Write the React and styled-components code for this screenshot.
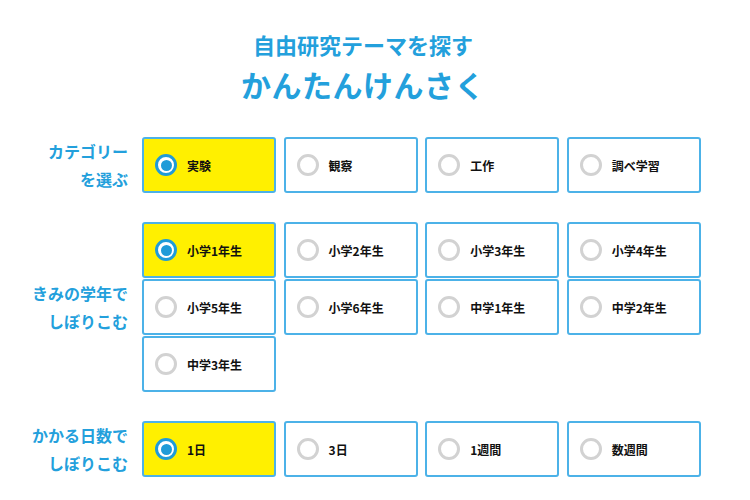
import React, { useState } from "react";
import styled, { createGlobalStyle } from "styled-components";

const GlobalStyle = createGlobalStyle`
  body {
    margin: 0;
    background: #fff;
    font-family: "Noto Sans CJK JP", "Noto Sans", sans-serif;
  }
`;

const BLUE = "#23a0dc";

const Page = styled.div`
  width: 750px;
  padding-top: 29px;
  padding-bottom: 20px;
`;

const Header = styled.header`
  display: flex;
  flex-direction: column;
  align-items: center;
  padding-right: 24px;
  color: ${BLUE};
  font-weight: 700;
`;

const SubTitle = styled.h2`
  margin: 0;
  font-size: 22px;
  line-height: 30px;
  font-weight: 700;
`;

const Title = styled.h1`
  margin: 5px 0 0;
  font-size: 30px;
  line-height: 40px;
  font-weight: 700;
  letter-spacing: 0.5px;
`;

const Form = styled.div`
  margin-top: 33px;
  display: flex;
  flex-direction: column;
  gap: 29px;
`;

const Section = styled.section`
  display: flex;
  align-items: center;
  gap: 14px;
`;

const Label = styled.div`
  width: 128px;
  text-align: right;
  color: ${BLUE};
  font-size: 16px;
  line-height: 28px;
  font-weight: 700;
`;

const Grid = styled.div`
  display: grid;
  grid-template-columns: repeat(4, 134px);
  column-gap: 7.6px;
  row-gap: 1px;
`;

const Card = styled.button`
  box-sizing: border-box;
  height: 56px;
  display: flex;
  align-items: center;
  gap: 10px;
  padding: 0 0 0 11px;
  border: 2px solid #4cb2e8;
  border-radius: 3px;
  background: ${(p) => (p.$active ? "#fff000" : "#fff")};
  cursor: pointer;
  font-family: inherit;
  font-size: 12px;
  font-weight: 700;
  color: #111;
  text-align: left;
`;

const Radio = styled.span`
  box-sizing: border-box;
  width: 22px;
  height: 22px;
  flex: none;
  border-radius: 50%;
  border: 3px solid ${(p) => (p.$active ? "#1f9bd8" : "#d2d2d2")};
  background: #fff;
  display: flex;
  align-items: center;
  justify-content: center;

  &::after {
    content: "";
    width: 11px;
    height: 11px;
    border-radius: 50%;
    background: ${(p) => (p.$active ? "#1f9bd8" : "transparent")};
  }
`;

const groups = [
  {
    key: "category",
    label: ["カテゴリー", "を選ぶ"],
    options: ["実験", "観察", "工作", "調べ学習"],
  },
  {
    key: "grade",
    label: ["きみの学年で", "しぼりこむ"],
    options: [
      "小学1年生",
      "小学2年生",
      "小学3年生",
      "小学4年生",
      "小学5年生",
      "小学6年生",
      "中学1年生",
      "中学2年生",
      "中学3年生",
    ],
  },
  {
    key: "days",
    label: ["かかる日数で", "しぼりこむ"],
    options: ["1日", "3日", "1週間", "数週間"],
  },
];

const OptionGroup = ({ group, value, onChange }) => (
  <Section>
    <Label>
      {group.label[0]}
      <br />
      {group.label[1]}
    </Label>
    <Grid>
      {group.options.map((opt) => (
        <Card
          key={opt}
          type="button"
          $active={value === opt}
          onClick={() => onChange(opt)}
        >
          <Radio $active={value === opt} />
          {opt}
        </Card>
      ))}
    </Grid>
  </Section>
);

export default function App() {
  const [selected, setSelected] = useState({
    category: "実験",
    grade: "小学1年生",
    days: "1日",
  });

  return (
    <Page>
      <GlobalStyle />
      <Header>
        <SubTitle>自由研究テーマを探す</SubTitle>
        <Title>かんたんけんさく</Title>
      </Header>
      <Form>
        {groups.map((g) => (
          <OptionGroup
            key={g.key}
            group={g}
            value={selected[g.key]}
            onChange={(v) => setSelected({ ...selected, [g.key]: v })}
          />
        ))}
      </Form>
    </Page>
  );
}
